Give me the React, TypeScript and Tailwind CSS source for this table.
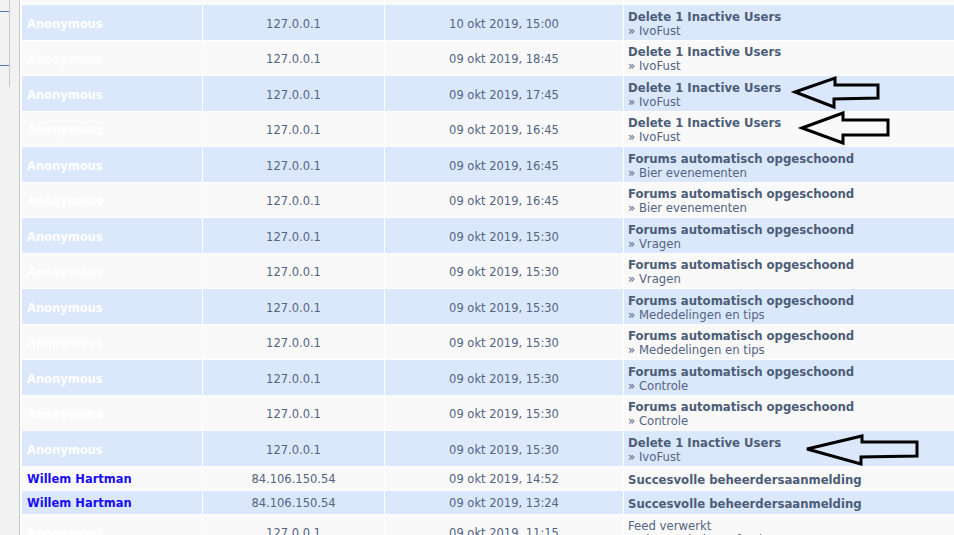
import React from 'react'

type LogRow = {
  user: string
  ip: string
  date: string
  title: string
  sub?: string
  bold?: boolean
  short?: boolean
}

const ROWS: LogRow[] = [
  { user: 'Anonymous', ip: '127.0.0.1', date: '10 okt 2019, 15:00', title: 'Delete 1 Inactive Users', sub: 'IvoFust' },
  { user: 'Anonymous', ip: '127.0.0.1', date: '09 okt 2019, 18:45', title: 'Delete 1 Inactive Users', sub: 'IvoFust' },
  { user: 'Anonymous', ip: '127.0.0.1', date: '09 okt 2019, 17:45', title: 'Delete 1 Inactive Users', sub: 'IvoFust' },
  { user: 'Anonymous', ip: '127.0.0.1', date: '09 okt 2019, 16:45', title: 'Delete 1 Inactive Users', sub: 'IvoFust' },
  { user: 'Anonymous', ip: '127.0.0.1', date: '09 okt 2019, 16:45', title: 'Forums automatisch opgeschoond', sub: 'Bier evenementen' },
  { user: 'Anonymous', ip: '127.0.0.1', date: '09 okt 2019, 16:45', title: 'Forums automatisch opgeschoond', sub: 'Bier evenementen' },
  { user: 'Anonymous', ip: '127.0.0.1', date: '09 okt 2019, 15:30', title: 'Forums automatisch opgeschoond', sub: 'Vragen' },
  { user: 'Anonymous', ip: '127.0.0.1', date: '09 okt 2019, 15:30', title: 'Forums automatisch opgeschoond', sub: 'Vragen' },
  { user: 'Anonymous', ip: '127.0.0.1', date: '09 okt 2019, 15:30', title: 'Forums automatisch opgeschoond', sub: 'Mededelingen en tips' },
  { user: 'Anonymous', ip: '127.0.0.1', date: '09 okt 2019, 15:30', title: 'Forums automatisch opgeschoond', sub: 'Mededelingen en tips' },
  { user: 'Anonymous', ip: '127.0.0.1', date: '09 okt 2019, 15:30', title: 'Forums automatisch opgeschoond', sub: 'Controle' },
  { user: 'Anonymous', ip: '127.0.0.1', date: '09 okt 2019, 15:30', title: 'Forums automatisch opgeschoond', sub: 'Controle' },
  { user: 'Anonymous', ip: '127.0.0.1', date: '09 okt 2019, 15:30', title: 'Delete 1 Inactive Users', sub: 'IvoFust' },
  { user: 'Willem Hartman', ip: '84.106.150.54', date: '09 okt 2019, 14:52', title: 'Succesvolle beheerdersaanmelding', short: true },
  { user: 'Willem Hartman', ip: '84.106.150.54', date: '09 okt 2019, 13:24', title: 'Succesvolle beheerdersaanmelding', short: true },
  { user: 'Anonymous', ip: '127.0.0.1', date: '09 okt 2019, 11:15', title: 'Feed verwerkt', sub: 'phpBB.nl nieuwsfeed', bold: false },
]

// hand-drawn annotation arrows, page coordinates
const ARROWS = [
  '795,92 835,78 835,85 878,85 878,98 834,99 834,107',
  '802,128 843,113 843,120 888,120 888,135 843,135 843,143',
  '807,449 862,436 862,442 917,442 917,456 861,457 861,464',
]

function LogRowView({ row, index }: { row: LogRow; index: number }) {
  const bg = index % 2 === 0 ? 'bg-[#dbe8fc]' : 'bg-[#f9f9f9]'
  const h = row.short ? 'h-[23px]' : 'h-[34.5px]'
  const isAnon = row.user === 'Anonymous'
  return (
    <>
      <div className={`${bg} ${h} flex items-center pl-[5px] pt-[4px]`}>
        <span className={`text-[11.5px] font-bold ${isAnon ? 'text-white' : 'text-[#1a0cf0]'}`}>{row.user}</span>
      </div>
      <div className={`${bg} ${h} flex items-center justify-center pt-[4px] text-[11.5px] text-[#536482]`}>{row.ip}</div>
      <div className={`${bg} ${h} flex items-center justify-center pt-[4px] text-[11.5px] text-[#536482]`}>{row.date}</div>
      <div className={`${bg} ${h} flex flex-col justify-center whitespace-nowrap pl-[4px] pt-[3px] text-[11.7px] leading-[14px]`}>
        <span className={row.bold === false ? 'text-[#536482]' : 'font-bold text-[#4c5d77]'}>{row.title}</span>
        {row.sub && <span className="text-[#536482]">» {row.sub}</span>}
      </div>
    </>
  )
}

export default function App() {
  return (
    <div className="relative flex h-[535px] w-[954px] overflow-hidden bg-white font-['DejaVu_Sans',Verdana,sans-serif]">
      {/* left menu edge */}
      <div className="w-[20px] shrink-0 border-r border-[#c8c8c8] bg-[#f2f2f2]">
        <div className="h-[87px] w-[10px] border-r border-[#c8c8c8]">
          <div className="h-[11px]" />
          <div className="h-px bg-[#4a7ab5]" />
          <div className="h-[53px]" />
          <div className="h-px bg-[#4a7ab5]" />
        </div>
      </div>

      <div className="ml-[2px] min-w-0 flex-1">
        <div className="grid grid-cols-[180px_181px_238px_360px] gap-px">
          <div className="h-[4px] bg-[#f9f9f9]" />
          <div className="h-[4px] bg-[#f9f9f9]" />
          <div className="h-[4px] bg-[#f9f9f9]" />
          <div className="h-[4px] bg-[#f9f9f9]" />
          {ROWS.map((row, i) => (
            <LogRowView key={i} row={row} index={i} />
          ))}
        </div>
      </div>

      <svg className="pointer-events-none absolute inset-0" width="954" height="535">
        {ARROWS.map((pts) => (
          <polygon key={pts} points={pts} fill="none" stroke="#000" strokeWidth="3" strokeLinejoin="miter" />
        ))}
      </svg>
    </div>
  )
}
